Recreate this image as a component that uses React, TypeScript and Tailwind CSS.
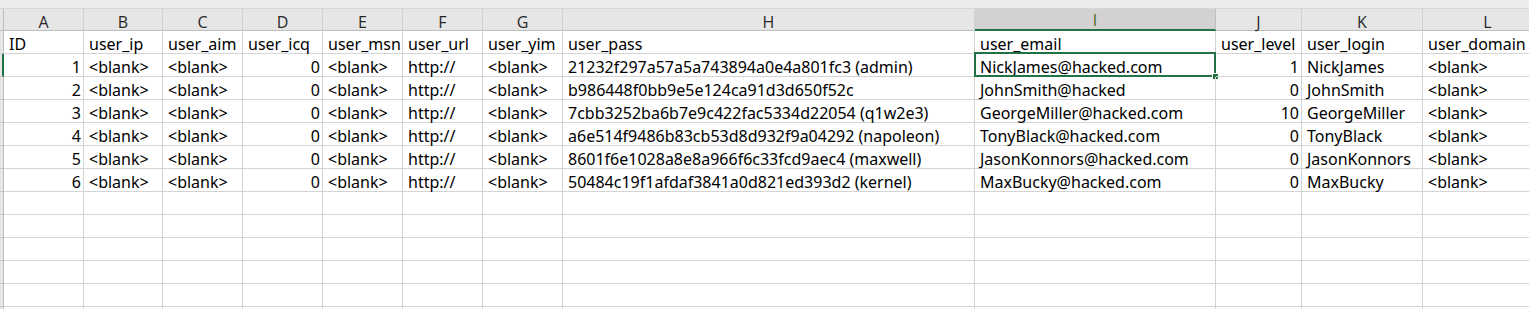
import React from "react";

type Col = { letter: string; w: string; right?: boolean };

const cols: Col[] = [
  { letter: "A", w: "w-[80px]", right: true },
  { letter: "B", w: "w-[79px]" },
  { letter: "C", w: "w-[80px]" },
  { letter: "D", w: "w-[80px]", right: true },
  { letter: "E", w: "w-[80px]" },
  { letter: "F", w: "w-[80px]" },
  { letter: "G", w: "w-[80px]" },
  { letter: "H", w: "w-[412px]" },
  { letter: "I", w: "w-[241px]" },
  { letter: "J", w: "w-[86px]", right: true },
  { letter: "K", w: "w-[121px]" },
  { letter: "L", w: "w-[130px]" },
];

const header = [
  "ID",
  "user_ip",
  "user_aim",
  "user_icq",
  "user_msn",
  "user_url",
  "user_yim",
  "user_pass",
  "user_email",
  "user_level",
  "user_login",
  "user_domain",
];

const data: [string, string, string, string, string][] = [
  ["1", "21232f297a57a5a743894a0e4a801fc3 (admin)", "NickJames@hacked.com", "1", "NickJames"],
  ["2", "b986448f0bb9e5e124ca91d3d650f52c", "JohnSmith@hacked", "0", "JohnSmith"],
  ["3", "7cbb3252ba6b7e9c422fac5334d22054 (q1w2e3)", "GeorgeMiller@hacked.com", "10", "GeorgeMiller"],
  ["4", "a6e514f9486b83cb53d8d932f9a04292 (napoleon)", "TonyBlack@hacked.com", "0", "TonyBlack"],
  ["5", "8601f6e1028a8e8a966f6c33fcd9aec4 (maxwell)", "JasonKonnors@hacked.com", "0", "JasonKonnors"],
  ["6", "50484c19f1afdaf3841a0d821ed393d2 (kernel)", "MaxBucky@hacked.com", "0", "MaxBucky"],
];

const B = "<blank>";

function rowValues(r: [string, string, string, string, string]): string[] {
  return [r[0], B, B, "0", B, "http://", B, r[1], r[2], r[3], r[4], B];
}

function Cell({
  col,
  text,
  selected,
  alignRight,
}: {
  col: Col;
  text: string;
  selected?: boolean;
  alignRight?: boolean;
}) {
  return (
    <div
      className={`${col.w} relative h-[23px] shrink-0 border-r border-b border-[#d4d4d4] flex items-end overflow-visible whitespace-nowrap ${
        alignRight ? "justify-end pr-[2px]" : "pl-[5px]"
      }`}
    >
      <span className="leading-[18px] text-black">{text}</span>
      {selected && (
        <div className="absolute left-[-1px] top-[-2px] w-[242px] h-[25px] border-2 border-[#217346] pointer-events-none">
          <div className="absolute right-[-5px] bottom-[-5px] w-[7px] h-[7px] bg-[#217346] border border-white" />
        </div>
      )}
    </div>
  );
}

function RowHead({ active }: { active?: boolean }) {
  return (
    <div
      className={`w-[4px] h-[23px] shrink-0 bg-[#e6e6e6] border-b border-[#c8c8c8] ${
        active ? "border-r-2 border-r-[#217346]" : "border-r border-r-[#bdbdbd]"
      }`}
    />
  );
}

export default function App() {
  const rows: string[][] = [header, ...data.map(rowValues)];
  const emptyRows = 6;
  return (
    <div
      className="w-[1529px] h-[309px] overflow-hidden bg-white text-[16px] text-black"
      style={{ fontFamily: '"Noto Sans", "Noto Sans CJK SC", sans-serif' }}
    >
      <div className="h-[9px] bg-[#ececec] border-b border-[#d6d6d6]" />
      <div className="flex h-[22px]" style={{ fontFamily: '"Open Sans", "Noto Sans", sans-serif' }}>
        <div className="w-[4px] shrink-0 bg-[#e6e6e6] border-r border-b border-[#bdbdbd]" />
        {cols.map((c) => {
          const sel = c.letter === "I";
          return (
            <div
              key={c.letter}
              className={`${c.w} shrink-0 flex items-end justify-center border-r ${
                sel
                  ? "bg-[#d2d2d2] border-b-2 border-b-[#217346] text-[#4a6b2a] border-r-[#bdbdbd]"
                  : "bg-[#e6e6e6] border-b border-b-[#bdbdbd] border-r-[#d0d0d0] text-[#262626]"
              }`}
            >
              <span className={sel ? "leading-[17px]" : "leading-[16px]"}>{c.letter}</span>
            </div>
          );
        })}
      </div>
      {rows.map((r, ri) => (
        <div key={ri} className="flex">
          <RowHead active={ri === 1} />
          {cols.map((c, ci) => (
            <Cell
              key={ci}
              col={c}
              text={r[ci]}
              alignRight={ri > 0 && !!c.right}
              selected={ri === 1 && c.letter === "I"}
            />
          ))}
        </div>
      ))}
      {Array.from({ length: emptyRows }).map((_, ri) => (
        <div key={"e" + ri} className="flex">
          <RowHead />
          {cols.map((c, ci) => (
            <Cell key={ci} col={c} text="" />
          ))}
        </div>
      ))}
    </div>
  );
}
